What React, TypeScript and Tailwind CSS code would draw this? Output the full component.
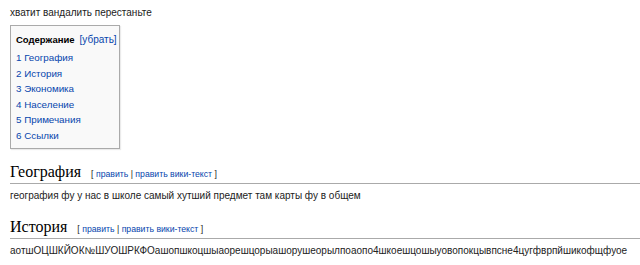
export default function App() {
  const toc = ['1 География', '2 История', '3 Экономика', '4 Население', '5 Примечания', '6 Ссылки'];
  const sans = { fontFamily: '"Liberation Sans", Arial, sans-serif' };
  return (
    <div className="bg-white w-[640px] h-[265px] overflow-hidden pl-[10px] pt-[6px] text-[10px] leading-[14px] text-[#222]" style={sans}>
      <p>хватит вандалить перестаньте</p>

      <div className="mt-[5px] w-[110px] h-[124px] border border-[#aaa] bg-[#f9f9f9] pl-[5px] pr-[4px] pt-[7px] shadow-[1px_1px_1px_rgba(0,0,0,0.08)]">
        <div className="flex items-baseline gap-[5px]">
          <span className="font-bold text-black text-[9.5px]">Содержание</span>
          <span className="text-[#0645ad]">[убрать]</span>
        </div>
        <ul className="mt-[3px]">
          {toc.map((t) => (
            <li key={t} className="leading-[15.5px] text-[9.8px] text-[#0645ad]">{t}</li>
          ))}
        </ul>
      </div>

      <Section title="География" className="mt-[13px]" />
      <p className="mt-[5px]">география фу у нас в школе самый хутший предмет там карты фу в общем</p>

      <Section title="История" className="mt-[14px]" />
      <p className="mt-[5px]">аотшОЦШКЙОК№ШУОШРКФОашопшкоцшыаорешцорыашорушеорылпоаопо4шкоешцошыуовопокцывпсне4цугфврпйшикофщфуое</p>
    </div>
  );
}

function Section({ title, className }: { title: string; className: string }) {
  return (
    <div className={`${className} flex items-baseline gap-[10px] border-b border-[#aaa] pb-[1px]`}>
      <span className="text-[16px] leading-[20px] text-black" style={{ fontFamily: '"Liberation Serif", "Times New Roman", serif' }}>{title}</span>
      <span className="text-[8.7px] text-[#222]">
        [ <span className="text-[#0645ad]">править</span> | <span className="text-[#0645ad]">править вики-текст</span> ]
      </span>
    </div>
  );
}
